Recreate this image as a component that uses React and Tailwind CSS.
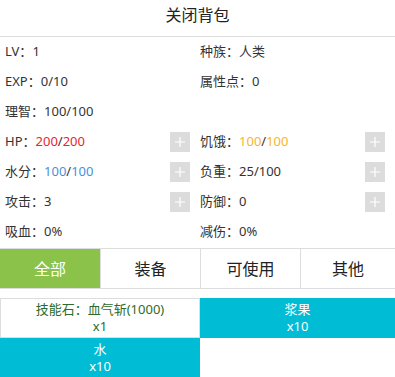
import React, { useState } from "react";

const font = { fontFamily: '"Noto Sans", "Noto Sans CJK SC", sans-serif' };

const Val = ({ a, b, color }) => (
  <span>
    <span className={color}>{a}</span>/<span className={color}>{b}</span>
  </span>
);

const PlusBtn = () => (
  <button className="w-5 h-5 bg-[#dcdcdc] flex items-center justify-center">
    <svg width="10" height="10" viewBox="0 0 10 10">
      <path d="M5 0v10M0 5h10" stroke="#fff" strokeWidth="1.2" />
    </svg>
  </button>
);

const stats = [
  [{ label: "LV", value: "1" }, { label: "种族", value: "人类" }],
  [{ label: "EXP", value: "0/10" }, { label: "属性点", value: "0" }],
  [{ label: "理智", value: "100/100" }, null],
  [
    { label: "HP", value: <Val a="200" b="200" color="text-[#e8262e]" />, plus: true },
    { label: "饥饿", value: <Val a="100" b="100" color="text-[#f6b52c]" />, plus: true },
  ],
  [
    { label: "水分", value: <Val a="100" b="100" color="text-[#4a8fdc]" />, plus: true },
    { label: "负重", value: "25/100", plus: true },
  ],
  [
    { label: "攻击", value: "3", plus: true },
    { label: "防御", value: "0", plus: true },
  ],
  [{ label: "吸血", value: "0%" }, { label: "减伤", value: "0%" }],
];

const tabs = ["全部", "装备", "可使用", "其他"];

const items = [
  { name: "技能石：血气斩(1000)", count: "x1", light: true },
  { name: "浆果", count: "x10" },
  { name: "水", count: "x10" },
];

const Cell = ({ s }) => (
  <div className="w-[195px] h-[30px] px-[5px] flex items-center justify-between text-[13px] text-[#333]">
    {s ? (
      <>
        <span>
          {s.label}：{s.value}
        </span>
        {s.plus && <PlusBtn />}
      </>
    ) : null}
  </div>
);

export default function App() {
  const [tab, setTab] = useState(0);
  return (
    <div className="w-[395px] h-[377px] bg-white overflow-hidden" style={font}>
      <div className="h-[37px] border-b border-[#ddd] flex items-center justify-center text-[16px] text-[#222] pb-[7px]">
        关闭背包
      </div>
      <div>
        {stats.map((row, i) => (
          <div key={i} className="flex">
            <Cell s={row[0]} />
            <Cell s={row[1]} />
          </div>
        ))}
      </div>
      <div className="grid grid-cols-[100px_100px_100px_95px] h-[41px] border-y border-[#ddd] mt-[1px]">
        {tabs.map((t, i) => (
          <button
            key={t}
            onClick={() => setTab(i)}
            className={`text-[16px] flex items-center justify-center ${
              i > 0 ? "border-l border-[#ddd]" : ""
            } ${tab === i ? "bg-[#8bc34a] text-white" : "text-[#222]"}`}
          >
            {t}
          </button>
        ))}
      </div>
      <div className="grid grid-cols-[200px_195px] mt-[9px]">
        {items.map((it) => (
          <div
            key={it.name}
            className={`h-10 flex flex-col items-center justify-center text-[13px] ${
              it.light
                ? "bg-white border border-[#ddd] text-[#2e6b2a]"
                : "bg-[#00bcd4] text-white"
            }`}
          >
            <div className="leading-[17px] h-[17px]">{it.name}</div>
            <div className="leading-[17px] h-[17px]">{it.count}</div>
          </div>
        ))}
      </div>
    </div>
  );
}
